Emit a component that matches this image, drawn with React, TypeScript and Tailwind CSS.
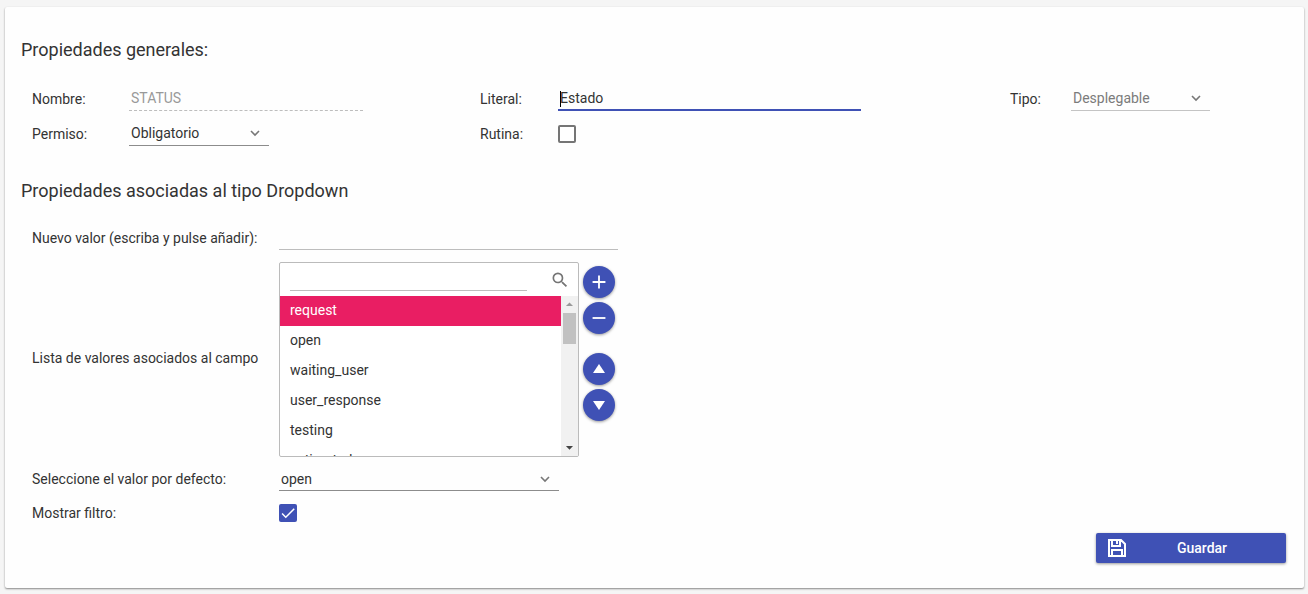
import { useState, type ReactNode } from "react";
import { MdAdd, MdArrowDropDown, MdArrowDropUp, MdCheck, MdRemove, MdSearch } from "react-icons/md";
import clsx from "clsx";

const initialValues = ["request", "open", "waiting_user", "user_response", "testing", "estimated"];

interface SelectFieldProps {
  id: string;
  options: string[];
  defaultValue: string;
  disabled?: boolean;
  className?: string;
}

function SelectField({ id, options, defaultValue, disabled, className }: SelectFieldProps) {
  return (
    <div
      className={clsx(
        "grid h-6 grid-cols-1 items-center border-b",
        disabled ? "border-[#c4c4c4] text-[#7b7b7b]" : "border-[#8c8c8c] text-[#333]",
        className
      )}
    >
      <select
        id={id}
        defaultValue={defaultValue}
        disabled={disabled}
        className="col-start-1 row-start-1 w-full appearance-none bg-transparent pr-6 pl-0.5 opacity-100 outline-none"
      >
        {options.map((option) => (
          <option key={option}>{option}</option>
        ))}
      </select>
      <svg
        viewBox="0 0 12 8"
        className="pointer-events-none col-start-1 row-start-1 mr-2 h-2 w-3 justify-self-end text-[#777]"
        aria-hidden="true"
      >
        <path d="M2 2 L6 6 L10 2" fill="none" stroke="currentColor" strokeWidth="1.6" />
      </svg>
    </div>
  );
}

interface CheckFieldProps {
  id: string;
  defaultChecked?: boolean;
}

function CheckField({ id, defaultChecked }: CheckFieldProps) {
  return (
    <div className="grid h-[18px] w-[18px]">
      <input
        id={id}
        type="checkbox"
        defaultChecked={defaultChecked}
        className="peer col-start-1 row-start-1 h-[18px] w-[18px] appearance-none rounded-xs border-2 border-[#757575] bg-white checked:border-[#3f51b5] checked:bg-[#3f51b5]"
      />
      <MdCheck className="pointer-events-none invisible col-start-1 row-start-1 h-[18px] w-[18px] text-white peer-checked:visible" />
    </div>
  );
}

function RoundButton({ label, onClick, children }: { label: string; onClick: () => void; children: ReactNode }) {
  return (
    <button
      type="button"
      aria-label={label}
      onClick={onClick}
      className="flex h-8 w-8 items-center justify-center rounded-full bg-[#3f51b5] text-white shadow-[0_1px_3px_rgba(0,0,0,0.4)]"
    >
      {children}
    </button>
  );
}

export default function App() {
  const [values, setValues] = useState(initialValues);
  const [selected, setSelected] = useState("request");
  const [newValue, setNewValue] = useState("");

  const addValue = () => {
    if (!newValue || values.includes(newValue)) return;
    setValues([...values, newValue]);
    setNewValue("");
  };

  const removeValue = () => setValues(values.filter((value) => value !== selected));

  const moveValue = (step: number) => {
    const from = values.indexOf(selected);
    const to = from + step;
    if (from < 0 || to < 0 || to >= values.length) return;
    const next = [...values];
    [next[from], next[to]] = [next[to], next[from]];
    setValues(next);
  };

  return (
    <div className="min-h-screen bg-[#f5f5f5] pt-[7px] pr-1 pb-[5px] pl-[5px] font-[Roboto,sans-serif] text-sm text-[#333]">
      <form
        className="rounded-xs bg-[#fefefe] pt-[31px] pr-[18px] pb-[25px] pl-4 shadow-[0_1px_2px_rgba(0,0,0,0.45)]"
        onSubmit={(e) => e.preventDefault()}
      >
        <h2 className="text-lg leading-6">Propiedades generales:</h2>

        <div className="mt-[19px] grid grid-cols-[448fr_530fr_276fr] pl-[11px]">
          {/* Name and permission */}
          <div>
            <div className="flex h-[35px] items-center">
              <label htmlFor="nombre" className="w-[97px]">Nombre:</label>
              <input
                id="nombre"
                disabled
                defaultValue="STATUS"
                className="h-6 w-[234px] border-b border-dashed border-[#bdbdbd] bg-transparent px-0.5 text-[#999]"
              />
            </div>
            <div className="flex h-[35px] items-center">
              <label htmlFor="permiso" className="w-[97px]">Permiso:</label>
              <SelectField id="permiso" className="w-[140px]" defaultValue="Obligatorio" options={["Obligatorio", "Opcional"]} />
            </div>
          </div>

          {/* Literal and routine */}
          <div>
            <div className="flex h-[35px] items-center">
              <label htmlFor="literal" className="w-[78px]">Literal:</label>
              <div className="relative">
                <input
                  id="literal"
                  defaultValue="Estado"
                  className="h-6 w-[303px] border-b-2 border-[#3f51b5] bg-transparent px-0.5 outline-none"
                />
                <span className="absolute top-1 left-0.5 h-4 w-px bg-black" />
              </div>
            </div>
            <div className="flex h-[35px] items-center">
              <label htmlFor="rutina" className="w-[78px]">Rutina:</label>
              <CheckField id="rutina" />
            </div>
          </div>

          <div className="flex h-[35px] items-center">
            <label htmlFor="tipo" className="w-[61px]">Tipo:</label>
            <SelectField id="tipo" disabled className="w-[139px]" defaultValue="Desplegable" options={["Desplegable"]} />
          </div>
        </div>

        <h2 className="mt-7 text-lg leading-6">Propiedades asociadas al tipo Dropdown</h2>

        <div className="mt-[19px] grid grid-cols-[247px_1fr] items-center pl-[11px]">
          <label htmlFor="nuevo" className="pt-1">Nuevo valor (escriba y pulse añadir):</label>
          <input
            id="nuevo"
            value={newValue}
            onChange={(e) => setNewValue(e.target.value)}
            className="h-7 w-[339px] border-b border-[#bdbdbd] bg-transparent px-0.5 outline-none"
          />

          <span id="lista" className="mt-2">Lista de valores asociados al campo</span>
          <div className="mt-3 flex gap-1">
            <div className="h-[195px] w-[300px] overflow-hidden rounded-xs border border-[#bbb] bg-white">
              <div className="flex h-[33px] items-center justify-between pr-2 pl-2.5">
                <input aria-label="Filtrar valores" className="h-[22px] w-[237px] border-b border-[#bdbdbd] outline-none" />
                <MdSearch className="h-5 w-5 text-[#757575]" />
              </div>
              <div className="flex h-40">
                <ul role="listbox" aria-labelledby="lista" className="flex-1 overflow-hidden">
                  {values.map((value) => (
                    <li
                      key={value}
                      role="option"
                      aria-selected={value === selected}
                      onClick={() => setSelected(value)}
                      className={clsx(
                        "h-[30px] cursor-pointer px-2.5 leading-7",
                        value === selected && "bg-[#e91e63] text-white"
                      )}
                    >
                      {value}
                    </li>
                  ))}
                </ul>
                <div className="flex w-[17px] flex-col items-center bg-[#f1f1f1]">
                  <MdArrowDropUp className="h-[17px] w-[17px] text-[#999]" />
                  <div className="h-[31px] w-[13px] bg-[#c1c1c1]" />
                  <MdArrowDropDown className="mt-auto h-[17px] w-[17px] text-[#444]" />
                </div>
              </div>
            </div>
            <div className="flex flex-col gap-1 pt-1">
              <RoundButton label="Añadir" onClick={addValue}>
                <MdAdd className="h-[22px] w-[22px]" />
              </RoundButton>
              <RoundButton label="Quitar" onClick={removeValue}>
                <MdRemove className="h-[22px] w-[22px]" />
              </RoundButton>
              <div className="mt-[15px] flex flex-col gap-1">
                <RoundButton label="Subir" onClick={() => moveValue(-1)}>
                  <svg viewBox="0 0 12 10" className="h-2.5 w-3" fill="currentColor">
                    <path d="M6 0 L12 9 H0 Z" />
                  </svg>
                </RoundButton>
                <RoundButton label="Bajar" onClick={() => moveValue(1)}>
                  <svg viewBox="0 0 12 10" className="h-2.5 w-3" fill="currentColor">
                    <path d="M6 10 L12 1 H0 Z" />
                  </svg>
                </RoundButton>
              </div>
            </div>
          </div>

          <label htmlFor="defecto" className="mt-2.5">Seleccione el valor por defecto:</label>
          <SelectField id="defecto" className="mt-2.5 w-[280px]" defaultValue="open" options={initialValues} />

          <label htmlFor="filtro" className="mt-3">Mostrar filtro:</label>
          <div className="mt-3">
            <CheckField id="filtro" defaultChecked />
          </div>
        </div>

        <div className="mt-2.5 flex justify-end">
          <button
            type="submit"
            className="flex h-[30px] w-[190px] items-center rounded-xs bg-[#3f51b5] pr-2 pl-3 font-medium text-white shadow-[0_1px_3px_rgba(0,0,0,0.4)]"
          >
            <svg viewBox="0 0 18 18" className="h-[18px] w-[18px]" fill="none" stroke="currentColor" strokeWidth="2">
              <path d="M1 1 H13 L17 5 V17 H1 Z M4 17 V11 H14 V17 M4 1 V7 H12 V1" />
              <path d="M9 2 V5" />
            </svg>
            <span className="flex-1 text-center">Guardar</span>
          </button>
        </div>
      </form>
    </div>
  );
}
